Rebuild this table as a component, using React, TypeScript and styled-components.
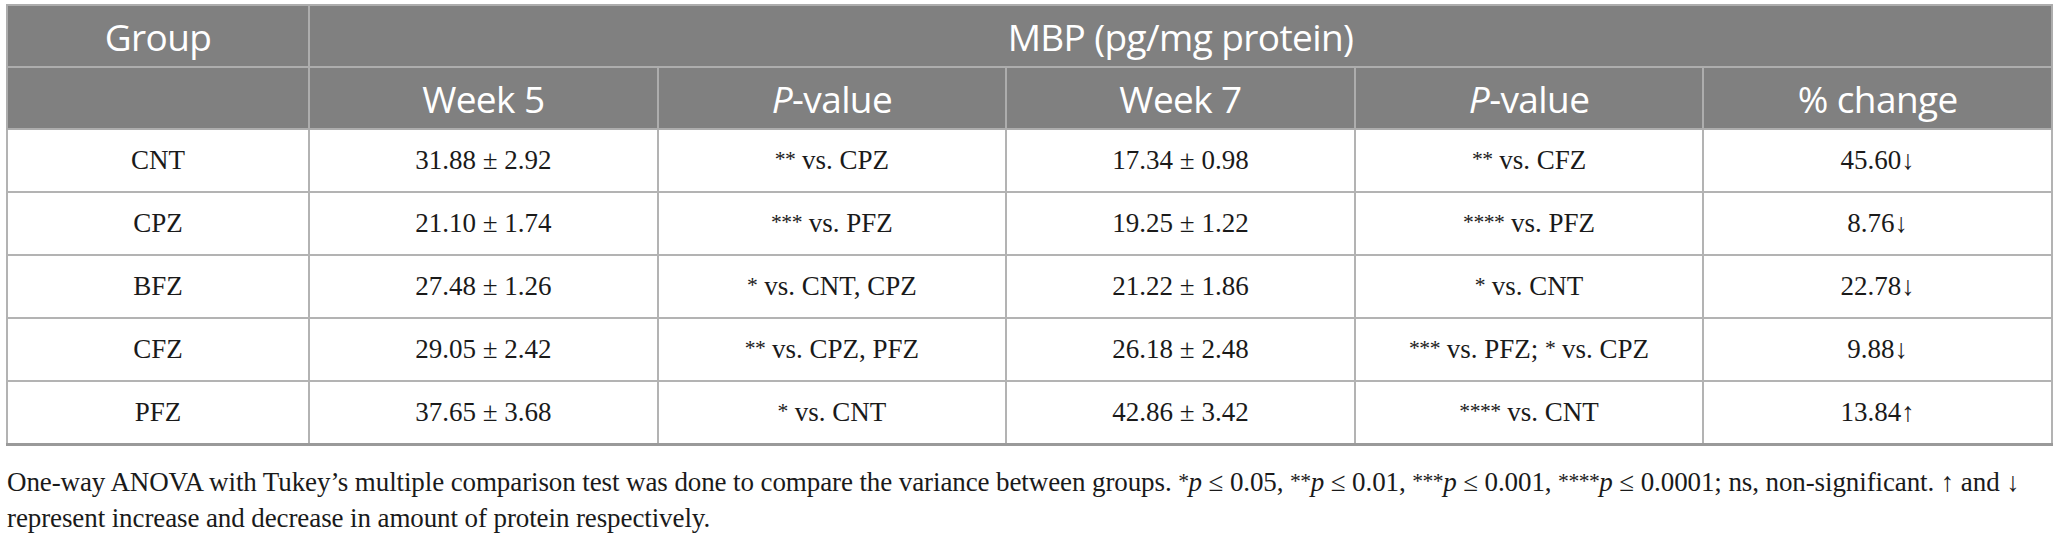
import React from "react";
import styled, {createGlobalStyle} from "styled-components";

const GlobalStyle = createGlobalStyle`
  body {
    margin: 0;
    background: #ffffff;
  }
`

const Page = styled.div`
  padding: 4px 6px 0 6px;
  width: 2053px;
  box-sizing: border-box;
`

const Table = styled.table`
  border-collapse: collapse;
  width: 2047px;
  table-layout: fixed;
  border-bottom: 3px solid #9a9a9a;
`

const HeadCell = styled.th<{ $w?: number }>`
  background: #808080;
  color: #ffffff;
  font-family: "Open Sans", "Noto Sans", sans-serif;
  font-weight: 400;
  font-size: 37px;
  letter-spacing: -0.6px;
  height: 60px;
  padding: 0;
  border: 2px solid #adadad;
  text-align: center;
  vertical-align: middle;
  ${p => p.$w ? `width: ${p.$w}px;` : ""}
`

const Cell = styled.td`
  font-family: "Liberation Serif", "Times New Roman", serif;
  font-size: 27px;
  color: #1a1a1a;
  height: 61px;
  padding: 0;
  border: 2px solid #b3b3b3;
  text-align: center;
  vertical-align: middle;
`

const Ital = styled.i`
  font-style: italic;
`

const Stars = styled.span`
  font-size: 0.8em;
  position: relative;
  top: -0.12em;
  letter-spacing: -0.5px;
`

const Note = styled.p`
  margin: 19px 0 0 1px;
  font-family: "Liberation Serif", "Times New Roman", serif;
  font-size: 27px;
  line-height: 34px;
  color: #1a1a1a;
  letter-spacing: -0.1px;
  white-space: nowrap;
`

interface Row {
    group: string,
    w5: string,
    p5: string,
    w7: string,
    p7: string,
    change: string
}

const rows: Row[] = [
    {group: "CNT", w5: "31.88 ± 2.92", p5: "** vs. CPZ", w7: "17.34 ± 0.98", p7: "** vs. CFZ", change: "45.60↓"},
    {group: "CPZ", w5: "21.10 ± 1.74", p5: "*** vs. PFZ", w7: "19.25 ± 1.22", p7: "**** vs. PFZ", change: "8.76↓"},
    {group: "BFZ", w5: "27.48 ± 1.26", p5: "* vs. CNT, CPZ", w7: "21.22 ± 1.86", p7: "* vs. CNT", change: "22.78↓"},
    {group: "CFZ", w5: "29.05 ± 2.42", p5: "** vs. CPZ, PFZ", w7: "26.18 ± 2.48", p7: "*** vs. PFZ; * vs. CPZ", change: "9.88↓"},
    {group: "PFZ", w5: "37.65 ± 3.68", p5: "* vs. CNT", w7: "42.86 ± 3.42", p7: "**** vs. CNT", change: "13.84↑"},
];

// split "** vs. CPZ" so the asterisks can sit smaller and raised
const withStars = (text: string) =>
    text.split(/(\*+)/).filter(Boolean).map((part, i) =>
        part.startsWith("*") ? <Stars key={i}>{part}</Stars> : <React.Fragment key={i}>{part}</React.Fragment>
    );

const App: React.FC = () => {
    return (
        <Page>
            <GlobalStyle/>
            <Table>
                <thead>
                <tr>
                    <HeadCell $w={300}>Group</HeadCell>
                    <HeadCell colSpan={5}>MBP (pg/mg protein)</HeadCell>
                </tr>
                <tr>
                    <HeadCell/>
                    <HeadCell $w={326}>Week 5</HeadCell>
                    <HeadCell $w={401}><Ital>P</Ital>-value</HeadCell>
                    <HeadCell $w={311}>Week 7</HeadCell>
                    <HeadCell $w={400}><Ital>P</Ital>-value</HeadCell>
                    <HeadCell $w={307}>% change</HeadCell>
                </tr>
                </thead>
                <tbody>
                {rows.map(r => (
                    <tr key={r.group}>
                        <Cell>{r.group}</Cell>
                        <Cell>{r.w5}</Cell>
                        <Cell>{withStars(r.p5)}</Cell>
                        <Cell>{r.w7}</Cell>
                        <Cell>{withStars(r.p7)}</Cell>
                        <Cell>{r.change}</Cell>
                    </tr>
                ))}
                </tbody>
            </Table>
            <Note>
                One-way ANOVA with Tukey’s multiple comparison test was done to compare the variance between
                groups. <Stars>*</Stars><Ital>p</Ital> ≤ 0.05, <Stars>**</Stars><Ital>p</Ital> ≤ 0.01, <Stars>***</Stars><Ital>p</Ital> ≤
                0.001, <Stars>****</Stars><Ital>p</Ital> ≤ 0.0001; ns, non-significant. ↑ and ↓<br/>
                represent increase and decrease in amount of protein respectively.
            </Note>
        </Page>
    );
};

export default App;
